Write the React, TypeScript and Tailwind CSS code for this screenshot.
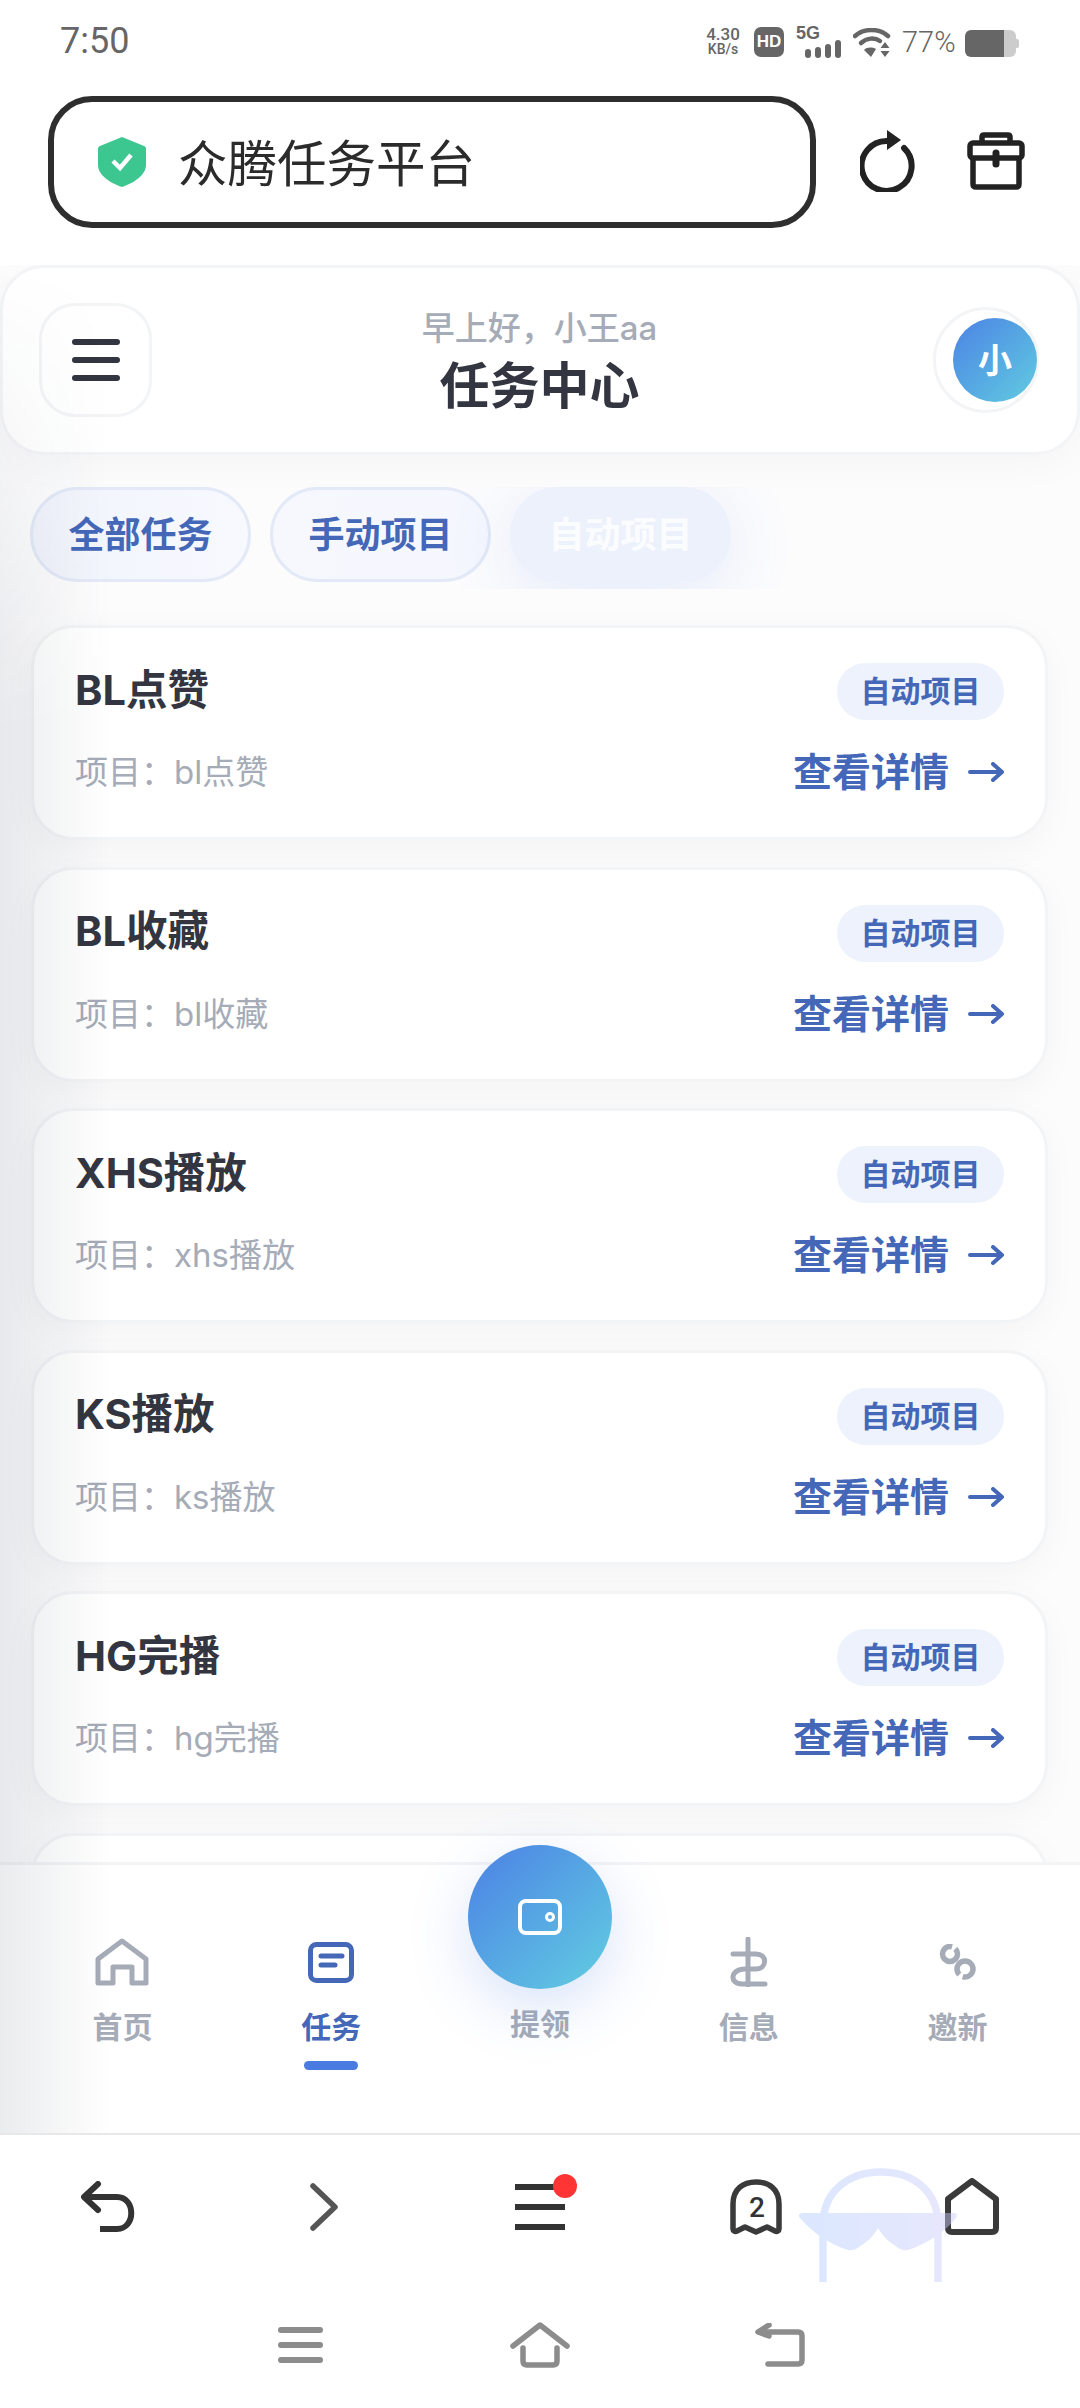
import React from "react";

const tasks = [
  ["BL点赞", "bl点赞"],
  ["BL收藏", "bl收藏"],
  ["XHS播放", "xhs播放"],
  ["KS播放", "ks播放"],
  ["HG完播", "hg完播"],
  ["", ""],
];

function StatusBar() {
  return (
    <div className="h-[82px] shrink-0 flex items-start justify-between pl-[60px] pr-[60px] text-[#666666] font-['Roboto',sans-serif]">
      <span className="text-[36px] leading-[42px] mt-[20px]">7:50</span>
      <div className="flex items-start relative h-[82px] w-[315px]">
        <div className="flex flex-col items-center w-[36px] mt-[27px] font-medium">
          <span className="text-[17px] leading-[15px]">4.30</span>
          <span className="text-[14px] leading-[14px]">KB/s</span>
        </div>
        <div className="ml-[13px] mt-[27px] w-[30px] h-[30px] rounded-[7px] bg-[#666666] text-white text-[17px] leading-[30px] font-black text-center font-['Liberation_Sans',sans-serif]">
          HD
        </div>
        <div className="ml-[12px] mt-[23px] relative w-[46px] h-[36px]">
          <span className="absolute left-0 top-0 text-[18px] leading-[20px] font-bold font-['Liberation_Sans',sans-serif]">5G</span>
          <svg className="absolute left-[9px] top-[17px]" width="36" height="18" viewBox="0 0 36 18" fill="#666666">
            <rect x="0" y="9" width="6" height="9" rx="3" />
            <rect x="10" y="7" width="6" height="11" rx="3" />
            <rect x="20" y="4" width="6" height="14" rx="3" />
            <rect x="30" y="0" width="6" height="18" rx="3" />
          </svg>
        </div>
        <svg className="ml-[11px] mt-[28px]" width="38" height="30" viewBox="0 0 38 30" fill="none">
          <path d="M2 8C11 0 26 0 35 8" stroke="#666" strokeWidth="4.5" strokeLinecap="round" />
          <path d="M8 15C14 9.500 22 9.500 27 13" stroke="#666" strokeWidth="4.5" strokeLinecap="round" />
          <path d="M11 22C14 19 19 19 23 21L18 29Z" fill="#666" />
          <path d="M32 14L36.500 20H27.500ZM32 29L27.500 23H36.500Z" fill="#666" />
        </svg>
        <span className="ml-[11px] mt-[24px] text-[29px] leading-[36px] font-light">77%</span>
        <div className="ml-[9px] mt-[30px] flex items-center">
          <div className="w-[39px] h-[27px] rounded-l-[6px] bg-[#666666]" />
          <div className="w-[12px] h-[27px] rounded-r-[6px] bg-[#cccccc]" />
          <div className="w-[3px] h-[9px] rounded-r-[2px] bg-[#cccccc]" />
        </div>
      </div>
    </div>
  );
}

function AddressRow() {
  return (
    <div className="h-[183px] shrink-0 relative pl-[48px] pt-[14px]">
      <div className="w-[768px] h-[132px] border-[6px] border-[#2e2e2e] rounded-[44px] flex items-center pl-[44px]">
        <svg width="48" height="50" viewBox="0 0 48 50">
          <path d="M24 0L46 9C47.500 9.600 48 10.500 48 12V28C48 38 36 46 24 50C12 46 0 38 0 28V12C0 10.500 .5 9.600 2 9Z" fill="#3cc690" />
          <path d="M15 24L22 31 33 18" fill="none" stroke="#fff" strokeWidth="4.500" />
        </svg>
        <span className="ml-[32px] mt-[3px] text-[49.500px] leading-[60px] text-[#2b2b2b]">众腾任务平台</span>
      </div>
      <svg className="absolute left-[860px] top-[48px]" width="58" height="62" viewBox="0 0 58 62" fill="none">
        <path d="M44 18A25 25 0 1 1 28 11" stroke="#222" strokeWidth="6" strokeLinecap="round" />
        <path d="M27 0L41 10 27 20Z" fill="#222" />
      </svg>
      <svg className="absolute left-[967px] top-[50px]" width="58" height="58" viewBox="0 0 58 58" fill="none" stroke="#222" strokeWidth="5.500" strokeLinejoin="round">
        <path d="M15 11V5Q15 3 17 3H41Q43 3 43 5V11" />
        <rect x="3" y="11" width="52" height="15" rx="3" />
        <path d="M6 26V52Q6 55 9 55H49Q52 55 52 52V26" />
        <path d="M29 21V32" strokeWidth="7" strokeLinecap="round" />
      </svg>
    </div>
  );
}

function Header() {
  return (
    <div className="h-[190px] shrink-0 bg-white border-[3px] border-[#f3f4f6] rounded-[44px] shadow-[0_10px_40px_rgba(0,0,0,0.03)] flex items-center justify-between pl-[36px] pr-[38px] relative">
      <div className="w-[113px] h-[114px] rounded-[36px] border-[3px] border-[#f3f4f6] flex flex-col items-center justify-center gap-[12px] bg-white">
        <div className="w-[48px] h-[6px] rounded-full bg-[#333640]" />
        <div className="w-[48px] h-[6px] rounded-full bg-[#333640]" />
        <div className="w-[48px] h-[6px] rounded-full bg-[#333640]" />
      </div>
      <div className="flex flex-col items-center mt-[12px] -ml-[6px]">
        <span className="text-[33px] leading-[40px] font-medium text-[#a5abb7]">早上好，小王aa</span>
        <span className="text-[50px] leading-[76px] font-bold text-[#333640]">任务中心</span>
      </div>
      <div className="w-[106px] h-[106px] rounded-full border-[3px] border-[#f3f4f6] flex items-center justify-end">
        <div className="w-[84px] h-[84px] rounded-full bg-gradient-to-br from-[#4d82e3] to-[#62cbe0] -mr-[1px] flex items-center justify-center text-white text-[34px] font-bold">
          小
        </div>
      </div>
    </div>
  );
}

function Tabs() {
  return (
    <div className="mt-[32px] h-[102px] shrink-0 w-[820px] overflow-hidden flex items-start gap-[19px] pl-[30px]">
      <div className="w-[221px] h-[95px] rounded-[48px] border-[3px] border-[#e3e9f7] bg-gradient-to-r from-[#f1f4fb] to-[#f7f9ff] flex items-center justify-center text-[36px] leading-[44px] font-bold text-[#4467b8]">全部任务</div>
      <div className="w-[221px] h-[95px] rounded-[48px] border-[3px] border-[#e3e9f7] bg-gradient-to-r from-[#f6f8fe] to-[#f5f7fe] flex items-center justify-center text-[36px] leading-[44px] font-bold text-[#4467b8]">手动项目</div>
      <div className="w-[221px] h-[95px] rounded-[48px] bg-[#edf1fb] shadow-[0_12px_70px_rgba(74,123,225,0.14)] flex items-center justify-center text-[36px] leading-[44px] font-bold text-white/80">自动项目</div>
    </div>
  );
}

function Card({ title, sub }: { title: string; sub: string }) {
  return (
    <div className="h-[215px] shrink-0 bg-white border-[3px] border-[#f3f4f6] rounded-[42px] shadow-[0_10px_36px_rgba(0,0,0,0.035)] px-[41px] pt-[35px]">
      {title && (
        <>
          <div className="flex items-center justify-between h-[57px]">
            <span className="text-[41.500px] leading-[52px] font-bold text-[#333640] -mt-[4px]">{title}</span>
            <span className="w-[167px] h-[57px] rounded-full bg-[#edf2fc] flex items-center justify-center text-[30px] font-semibold text-[#4467b8]">自动项目</span>
          </div>
          <div className="flex items-center justify-between h-[50px] mt-[27px]">
            <span className="text-[33px] leading-[44px] text-[#a5abb7]">项目：{sub}</span>
            <div className="flex items-center">
              <span className="text-[39px] leading-[50px] font-bold text-[#4467b8]">查看详情</span>
              <svg className="ml-[19px]" width="36" height="20" viewBox="0 0 36 20" fill="none" stroke="#4467b8" strokeWidth="4" strokeLinecap="round" strokeLinejoin="round">
                <path d="M2 10H33M25 2L34 10 25 18" />
              </svg>
            </div>
          </div>
        </>
      )}
    </div>
  );
}

function NavItem({ label, icon, active }: { label: string; icon: React.ReactNode; active?: boolean }) {
  return (
    <div className="flex flex-col items-center">
      <div className="h-[50px] flex items-center justify-center">{icon}</div>
      <span className={`mt-[20px] text-[30px] leading-[40px] font-bold ${active ? "text-[#4467b8]" : "text-[#a5abb7]"}`}>{label}</span>
      {active && <div className="mt-[14px] w-[54px] h-[9px] rounded-full bg-[#4a7be0]" />}
    </div>
  );
}

function BottomNav() {
  return (
    <div className="h-[271px] shrink-0 relative z-10 bg-white border-t-[3px] border-[#f3f4f6] grid grid-cols-5 px-[18px] pt-[72px]">
      <NavItem
        label="首页"
        icon={
          <svg width="54" height="48" viewBox="0 0 54 48" fill="none" stroke="#a5abb7" strokeWidth="5" strokeLinejoin="round">
            <path d="M3 45V21L27 3 51 21V45H37V29H18V45Z" />
          </svg>
        }
      />
      <NavItem
        active
        label="任务"
        icon={
          <svg width="46" height="41" viewBox="0 0 46 41" fill="none" stroke="#4467b8">
            <rect x="2.500" y="2.500" width="41" height="36" rx="6" strokeWidth="5" />
            <path d="M13 14H34M13 23H27" strokeWidth="5" strokeLinecap="round" />
          </svg>
        }
      />
      <div className="relative flex flex-col items-center">
        <div className="absolute -top-[92px] w-[144px] h-[144px] rounded-full bg-gradient-to-br from-[#4d7fe4] to-[#63cee0] shadow-[0_18px_60px_rgba(74,123,225,0.22)] flex items-center justify-center">
          <svg width="44" height="36" viewBox="0 0 44 36" fill="none">
            <rect x="2" y="2" width="40" height="32" rx="6" stroke="#fff" strokeWidth="4" />
            <circle cx="32" cy="18" r="3.500" stroke="#fff" strokeWidth="3" />
          </svg>
        </div>
        <div className="h-[50px]" />
        <span className="mt-[17px] text-[30px] leading-[40px] font-bold text-[#a5abb7]">提领</span>
      </div>
      <NavItem
        label="信息"
        icon={
          <svg width="38" height="50" viewBox="0 0 38 50" fill="none" stroke="#a5abb7" strokeWidth="5" strokeLinecap="round">
            <path d="M18 2V48" />
            <path d="M3 17H26C38 17 37 32 26 32H15C0 32 -1 47 12 47H35" />
          </svg>
        }
      />
      <NavItem
        label="邀新"
        icon={
          <svg width="37" height="36" viewBox="0 0 37 36" fill="none" stroke="#a5abb7" strokeWidth="5.500">
            <circle cx="11" cy="10" r="7.500" strokeDasharray="43 4" transform="rotate(-45 11 10)" />
            <circle cx="26" cy="25" r="8" strokeDasharray="46 4" transform="rotate(135 26 25)" />
          </svg>
        }
      />
    </div>
  );
}

function Toolbar() {
  return (
    <div className="h-[146px] shrink-0 bg-white border-t-[2px] border-[#e8e8e8] grid grid-cols-5">
      <div className="flex items-center justify-center">
        <svg width="54" height="52" viewBox="0 0 54 52" fill="none" stroke="#333" strokeWidth="6" strokeLinejoin="round">
          <path d="M17 3L3 16 17 29" strokeLinecap="round" />
          <path d="M4 16H36C55 16 55 48 36 48H19" />
        </svg>
      </div>
      <div className="flex items-center justify-center">
        <svg width="30" height="48" viewBox="0 0 30 48" fill="none" stroke="#555" strokeWidth="5.500" strokeLinecap="round" strokeLinejoin="round">
          <path d="M4 3L26 24 4 45" />
        </svg>
      </div>
      <div className="flex items-center justify-center">
        <div className="relative w-[50px] flex flex-col gap-[14px]">
          <div className="h-[6px] bg-[#333]" />
          <div className="h-[6px] bg-[#333]" />
          <div className="h-[6px] bg-[#333]" />
          <div className="absolute -top-[10px] left-[38px] w-[24px] h-[24px] rounded-full bg-[#ff3535]" />
        </div>
      </div>
      <div className="flex items-center justify-center">
        <svg width="52" height="56" viewBox="0 0 52 56" fill="none">
          <path d="M3 50V25C3 10 13 3 26 3S49 10 49 25V50C49 52 47 53 45 52L37 48 26 53 15 48 7 52C5 53 3 52 3 50Z" stroke="#3a3a3a" strokeWidth="5.500" strokeLinejoin="round" />
          <text x="27" y="38" textAnchor="middle" fontSize="28" fontWeight="500" fill="#333" fontFamily="Roboto, sans-serif">2</text>
        </svg>
      </div>
      <div className="flex items-center justify-center">
        <svg width="54" height="58" viewBox="0 0 54 58" fill="none" stroke="#3a3a3a" strokeWidth="6" strokeLinejoin="round">
          <path d="M3 21L27 3 51 21V50Q51 54 47 54H7Q3 54 3 50Z" />
        </svg>
      </div>
    </div>
  );
}

function SystemNav() {
  return (
    <div className="flex-1 bg-white flex justify-center items-start pt-[41px]">
      <div className="w-[240px] h-[50px] flex items-center justify-center">
        <div className="w-[45px] flex flex-col gap-[9px]">
          <div className="h-[6px] rounded-full bg-[#8c8c8c]" />
          <div className="h-[6px] rounded-full bg-[#8c8c8c]" />
          <div className="h-[6px] rounded-full bg-[#8c8c8c]" />
        </div>
      </div>
      <div className="w-[240px] h-[50px] flex items-center justify-center">
        <svg width="60" height="46" viewBox="0 0 60 46" fill="none" stroke="#8c8c8c" strokeWidth="5.500" strokeLinecap="round" strokeLinejoin="round">
          <path d="M3 24L30 3 57 24" />
          <path d="M13 26V39Q13 43 17 43H43Q47 43 47 39V26" />
        </svg>
      </div>
      <div className="w-[240px] h-[50px] flex items-center justify-center">
        <svg width="50" height="44" viewBox="0 0 50 44" fill="none" stroke="#8c8c8c" strokeWidth="5.500" strokeLinecap="round" strokeLinejoin="round">
          <path d="M14 2L3 9 14 13" />
          <path d="M5 9H43Q47 9 47 13V37Q47 41 43 41H13" />
        </svg>
      </div>
    </div>
  );
}

function Watermark() {
  return (
    <svg className="absolute left-[795px] top-[2160px] z-30 opacity-[0.46] pointer-events-none" width="170" height="125" viewBox="795 2160 170 125" fill="none">
      <defs>
        <linearGradient id="wm" x1="799" y1="0" x2="957" y2="0" gradientUnits="userSpaceOnUse">
          <stop offset="0" stopColor="#b1cdff" />
          <stop offset="1" stopColor="#cdcdfa" />
        </linearGradient>
      </defs>
      <path d="M823 2282V2225C823 2190 850 2172 881 2172S938 2190 938 2225V2282" stroke="url(#wm)" strokeWidth="7.500" />
      <path d="M802 2213H955Q958 2214 956 2218C945 2232 925 2245 908 2250Q905 2251 900 2249C890 2243 884 2238 878 2228C872 2238 866 2243 856 2249Q851 2251 848 2250C830 2245 812 2232 800 2218Q797 2214 802 2213Z" fill="url(#wm)" />
    </svg>
  );
}

export default function App() {
  return (
    <div className="relative w-[1080px] h-[2408px] overflow-hidden bg-white flex flex-col font-['Inter','Noto_Sans_CJK_SC','Noto_Sans',sans-serif]">
      <StatusBar />
      <AddressRow />
      <div className="h-[1597px] shrink-0 overflow-hidden bg-[#fcfcfd] flex flex-col">
        <Header />
        <Tabs />
        <div className="mt-[36px] pl-[31px] pr-[32px] flex flex-col gap-[26.500px]">
          {tasks.map((t, i) => (
            <Card key={i} title={t[0]} sub={t[1]} />
          ))}
        </div>
      </div>
      <BottomNav />
      <Toolbar />
      <SystemNav />
      <div className="absolute left-0 top-[265px] w-[110px] h-[1868px] z-20 pointer-events-none bg-gradient-to-r from-[rgba(30,40,60,0.09)] to-transparent [mask-image:linear-gradient(to_bottom,transparent,black_25%)]" />
      <Watermark />
    </div>
  );
}
